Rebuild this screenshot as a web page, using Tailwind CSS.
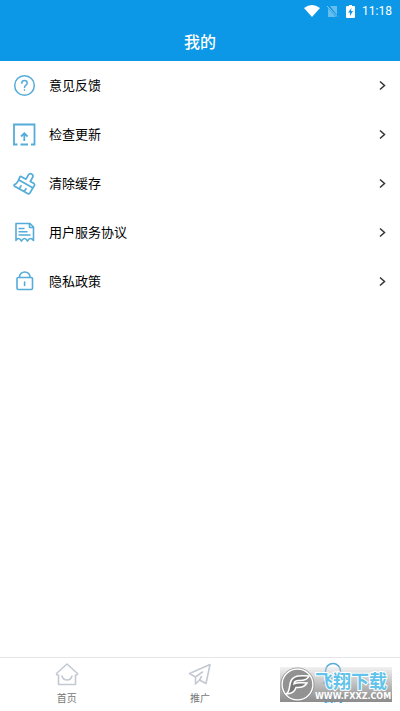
<!DOCTYPE html>
<html lang="zh-CN">
<head>
<meta charset="utf-8">
<meta name="viewport" content="width=device-width, initial-scale=1">
<title>我的</title>
<script src="https://cdn.jsdelivr.net/npm/@tailwindcss/browser@4"></script>
</head>
<body class="relative flex min-h-screen flex-col bg-white font-['Noto_Sans_CJK_SC',sans-serif] text-black">
<header class="bg-[#0c98e6] text-white">
  <div class="flex h-[22px] items-center justify-end pr-2 font-[Roboto,sans-serif]">
    <svg class="mr-[6px] h-3 w-4" viewBox="0 0 16 12" fill="#fff"><path d="M0 3Q8-3 16 3L8 12Z"/></svg>
    <svg class="mr-2 h-3 w-3" viewBox="0 0 12 12"><path d="M2 3V12H10ZM4 1H11V10Z" fill="#67bdec"/><path d="M1 1L11 11.500" stroke="#8bcdf1"/></svg>
    <svg class="mr-[7px] h-[13px] w-[9px]" viewBox="0 0 9 13"><path d="M3 0H6V1H8Q9 1 9 2V12Q9 13 8 13H1Q0 13 0 12V2Q0 1 1 1H3Z" fill="#fff"/><path d="M5.500 3L2 7.500H4V11L7 6H5Z" fill="#0c98e6"/></svg>
    <span class="text-xs">11:18</span>
  </div>
  <h1 class="flex h-[39px] items-center justify-center pb-0.5 text-base font-medium">我的</h1>
</header>
<main class="flex-1">
  <ul class="text-[13px] [&_a]:flex [&_a]:h-[49px] [&_a]:items-center [&_a]:gap-3 [&_a]:pr-2.5 [&_a]:pl-3 [&_span]:flex-1 [&_span]:pb-0.5">
    <li><a href="#feedback">
      <svg class="h-[25px] w-[25px]" viewBox="0 0 25 25" fill="none" stroke="#55acd9" stroke-width="1.500" stroke-linecap="round"><circle cx="12.500" cy="12.500" r="9.800"/><path d="M9.800 10.200Q9.900 7.600 12.500 7.600T15.200 10.200C15.200 12 12.500 12.200 12.500 14.400M12.500 17V17.200"/></svg>
      <span>意见反馈</span>
      <svg class="h-4 w-4" viewBox="0 0 16 16" fill="none" stroke="#333" stroke-width="1.500"><path d="M6 3.500L10.500 7.500L6 11.500"/></svg>
    </a></li>
    <li><a href="#update">
      <svg class="h-[25px] w-[25px]" viewBox="0 0 25 25" fill="none" stroke="#55acd9" stroke-width="1.800"><path d="M5.500 22.500H2V2.500H22.500V22.500H19M8.500 22.500H16M12.300 19V11.500M9 14.500L12.300 11.300L15.600 14.500"/></svg>
      <span>检查更新</span>
      <svg class="h-4 w-4" viewBox="0 0 16 16" fill="none" stroke="#333" stroke-width="1.500"><path d="M6 3.500L10.500 7.500L6 11.500"/></svg>
    </a></li>
    <li><a href="#cache">
      <svg class="h-[25px] w-[25px]" viewBox="0 0 25 25" fill="none" stroke="#55acd9" stroke-width="1.700" stroke-linejoin="round" stroke-linecap="round"><path d="M9 5.500L14 8.200L16.500 3.700Q17.700 1.900 19.600 2.900T20.800 6L18.300 10.500L22 12.600Q23 13.300 22.500 14.300L17.700 22.300Q17 23.200 16 22.700L2.600 15.200Q1.300 14 3 13.400Q6 11.500 7.700 6.200Q8.200 5.100 9 5.500ZM7 9L20.600 16.800M9 14.800L7.300 17.600M14 17.700L12.200 20.400"/></svg>
      <span>清除缓存</span>
      <svg class="h-4 w-4" viewBox="0 0 16 16" fill="none" stroke="#333" stroke-width="1.500"><path d="M6 3.500L10.500 7.500L6 11.500"/></svg>
    </a></li>
    <li><a href="#terms">
      <svg class="h-[25px] w-[25px]" viewBox="0 0 25 25" fill="none" stroke="#55acd9" stroke-width="1.600" stroke-linejoin="round"><path d="M4 3.500H18L21.500 7V20.500Q20 18.500 18.500 18.500T15.500 21Q14 18.500 12.500 18.500T9.500 21Q8 18.500 6.500 18.500T4 20.500ZM17.500 3.500V7.500H21.500M6.500 8.500H12.500M6.500 11.700H15.500M6.500 15H18.500"/></svg>
      <span>用户服务协议</span>
      <svg class="h-4 w-4" viewBox="0 0 16 16" fill="none" stroke="#333" stroke-width="1.500"><path d="M6 3.500L10.500 7.500L6 11.500"/></svg>
    </a></li>
    <li><a href="#privacy">
      <svg class="h-[25px] w-[25px]" viewBox="0 0 25 25" fill="none" stroke="#55acd9" stroke-width="1.600" stroke-linecap="round"><rect x="5" y="8.500" width="15.500" height="12" rx="1.200"/><path d="M7.500 8.500V8A5.200 5 0 0 1 18 8V8.500M12.600 13V16.500"/></svg>
      <span>隐私政策</span>
      <svg class="h-4 w-4" viewBox="0 0 16 16" fill="none" stroke="#333" stroke-width="1.500"><path d="M6 3.500L10.500 7.500L6 11.500"/></svg>
    </a></li>
  </ul>
</main>
<nav class="grid h-[54px] grid-cols-3 border-t border-[#e3e5e8] text-[10px] leading-4 text-[#777]">
  <a href="#home" class="flex flex-col items-center gap-1 pt-1">
    <svg class="h-6 w-6" viewBox="0 0 24 24" fill="none" stroke="#c3c9d3" stroke-width="1.600" stroke-linejoin="round" stroke-linecap="round"><path d="M12 2L22.500 11.500Q22.800 13 20.500 13V22.500H3.500V13Q1.200 13 1.500 11.500ZM7 14Q8 18 12 18T17 14"/></svg>
    <span>首页</span>
  </a>
  <a href="#promote" class="flex flex-col items-center gap-1 pt-1">
    <svg class="h-6 w-6" viewBox="0 0 24 24" fill="none" stroke="#c3c9d3" stroke-width="1.600" stroke-linejoin="round" stroke-linecap="round"><path d="M14.500 10L7.500 15L1.500 11.500L22 2.500L18 21.500L11.500 18L7.500 22V15M11.500 18L13.500 14.500"/></svg>
    <span>推广</span>
  </a>
  <a href="#mine" class="flex flex-col items-center gap-1 pt-1 text-[#0c98e6]">
    <svg class="h-6 w-6" viewBox="0 0 24 24" fill="none" stroke="#55acd9" stroke-width="1.600"><circle cx="12" cy="9" r="7.500"/><path d="M3 22Q4 16 9 16H15Q20 16 21 22"/></svg>
    <span>我的</span>
  </a>
</nav>
<aside class="absolute right-2 bottom-[9px] flex h-[35px] w-28 items-center bg-linear-to-b from-[#dddddd]/40 to-[#858585]/95">
  <svg class="h-[35px] w-[35px] shrink-0" viewBox="0 0 35 35"><circle cx="17.500" cy="17.500" r="15.500" fill="#929292" stroke="#fff" stroke-width="1.500"/><circle cx="17.500" cy="17.500" r="16.600" fill="none" stroke="#888" stroke-width=".7"/><path d="M6 27C12 24 7 13 15 10Q18 8 29 9Q27 14 18 13.500Q14 14 14 17Q17 15 27 16Q24 21 16 20.500Q14 27 6 27Z" fill="#777" stroke="#fff" stroke-width="1.500"/></svg>
  <div class="flex flex-col whitespace-nowrap">
    <span class="text-lg leading-6 font-bold text-[#62c3ea] [paint-order:stroke] [-webkit-text-stroke:2px_#fff]">飞翔下载</span>
    <span class="font-['DejaVu_Sans',sans-serif] text-[8px] leading-[9px] font-bold text-white">WWW.FXXZ.COM</span>
  </div>
</aside>
</body>
</html>
